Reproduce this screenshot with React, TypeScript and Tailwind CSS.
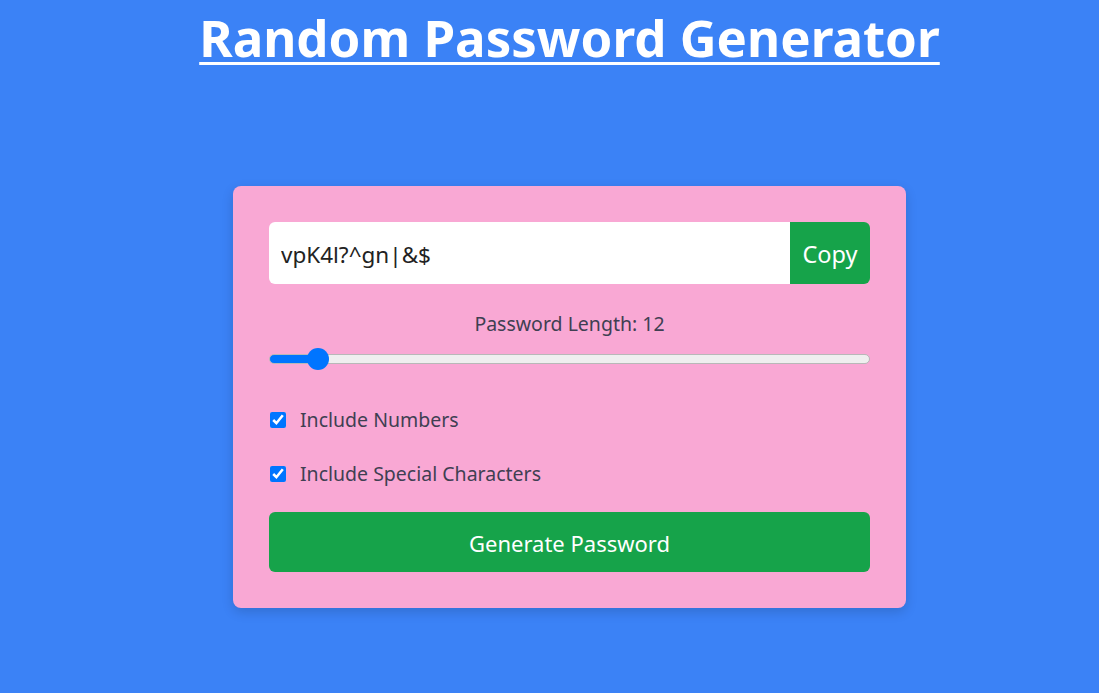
import React, { useState } from "react";

export default function App() {
  const [length, setLength] = useState(12);
  const [numbers, setNumbers] = useState(true);
  const [special, setSpecial] = useState(true);

  return (
    <div
      className="min-h-[693px] w-full bg-[#3b82f6] pl-10 flex flex-col items-center"
      style={{ fontFamily: '"Noto Sans", "Open Sans", sans-serif' }}
    >
      <h1 className="mt-[5px] text-[51px] leading-[64px] font-bold text-white underline decoration-[3px] underline-offset-[5px]">
        Random Password Generator
      </h1>

      <div className="mt-[117px] w-[673px] rounded-lg bg-[#f9a8d4] p-9 shadow-[0_4px_12px_rgba(0,0,0,0.15)]">
        <div className="flex h-[62px]">
          <input
            readOnly
            value="vpK4l?^gn|&$"
            className="flex-1 min-w-0 rounded-l-md bg-white px-3 pt-[3px] text-[22.5px] text-[#222] outline-none"
          />
          <button className="w-[80px] rounded-r-md bg-[#16a34a] pt-[3px] text-[23.5px] text-white">
            Copy
          </button>
        </div>

        <div className="mt-[28px] text-center text-[19.5px] leading-[24px] text-[#3f3f52]">
          Password Length: {length}
        </div>
        <input
          type="range"
          min={4}
          max={128}
          value={length}
          onChange={(e) => setLength(Number(e.target.value))}
          className="mt-[12px] block h-[22px] w-full appearance-none bg-transparent cursor-pointer
            [&::-webkit-slider-runnable-track]:h-[10px] [&::-webkit-slider-runnable-track]:rounded-full
            [&::-webkit-slider-runnable-track]:border [&::-webkit-slider-runnable-track]:border-[#b8b8b8]
            [&::-webkit-slider-runnable-track]:bg-[linear-gradient(to_right,#0075ff_0%,#0075ff_8%,#efefef_8%)]
            [&::-webkit-slider-thumb]:appearance-none [&::-webkit-slider-thumb]:mt-[-7px]
            [&::-webkit-slider-thumb]:h-[22px] [&::-webkit-slider-thumb]:w-[22px]
            [&::-webkit-slider-thumb]:rounded-full [&::-webkit-slider-thumb]:bg-[#0075ff]"
        />

        <label className="mt-[38px] flex items-center gap-[14px] text-[19.5px] leading-[24px] text-[#3f3f52]">
          <input
            type="checkbox"
            checked={numbers}
            onChange={(e) => setNumbers(e.target.checked)}
            className="ml-[1px] h-4 w-4 accent-[#0075ff]"
          />
          Include Numbers
        </label>
        <label className="mt-[30px] flex items-center gap-[14px] text-[19.5px] leading-[24px] text-[#3f3f52]">
          <input
            type="checkbox"
            checked={special}
            onChange={(e) => setSpecial(e.target.checked)}
            className="ml-[1px] h-4 w-4 accent-[#0075ff]"
          />
          Include Special Characters
        </label>

        <button className="mt-[26px] h-[60px] w-full rounded-md bg-[#16a34a] pt-[2px] text-[22px] text-white">
          Generate Password
        </button>
      </div>
    </div>
  );
}
